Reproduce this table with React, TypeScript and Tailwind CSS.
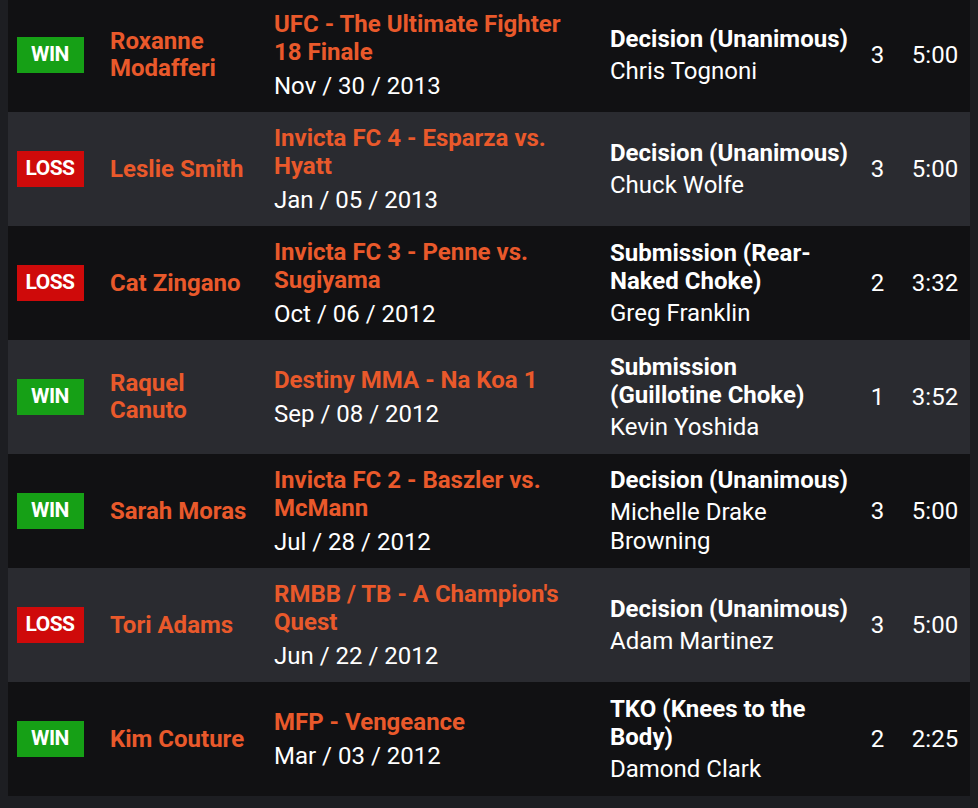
import React from 'react';

type Fight = {
  result: 'win' | 'loss';
  opponent: string[];
  event: string[];
  date: string;
  method: string[];
  referee: string[];
  round: string;
  time: string;
};

const fights: Fight[] = [
  { result: 'win', opponent: ['Roxanne', 'Modafferi'], event: ['UFC - The Ultimate Fighter', '18 Finale'], date: 'Nov / 30 / 2013', method: ['Decision (Unanimous)'], referee: ['Chris Tognoni'], round: '3', time: '5:00' },
  { result: 'loss', opponent: ['Leslie Smith'], event: ['Invicta FC 4 - Esparza vs.', 'Hyatt'], date: 'Jan / 05 / 2013', method: ['Decision (Unanimous)'], referee: ['Chuck Wolfe'], round: '3', time: '5:00' },
  { result: 'loss', opponent: ['Cat Zingano'], event: ['Invicta FC 3 - Penne vs.', 'Sugiyama'], date: 'Oct / 06 / 2012', method: ['Submission (Rear-', 'Naked Choke)'], referee: ['Greg Franklin'], round: '2', time: '3:32' },
  { result: 'win', opponent: ['Raquel', 'Canuto'], event: ['Destiny MMA - Na Koa 1'], date: 'Sep / 08 / 2012', method: ['Submission', '(Guillotine Choke)'], referee: ['Kevin Yoshida'], round: '1', time: '3:52' },
  { result: 'win', opponent: ['Sarah Moras'], event: ['Invicta FC 2 - Baszler vs.', 'McMann'], date: 'Jul / 28 / 2012', method: ['Decision (Unanimous)'], referee: ['Michelle Drake', 'Browning'], round: '3', time: '5:00' },
  { result: 'loss', opponent: ['Tori Adams'], event: ["RMBB / TB - A Champion's", 'Quest'], date: 'Jun / 22 / 2012', method: ['Decision (Unanimous)'], referee: ['Adam Martinez'], round: '3', time: '5:00' },
  { result: 'win', opponent: ['Kim Couture'], event: ['MFP - Vengeance'], date: 'Mar / 03 / 2012', method: ['TKO (Knees to the', 'Body)'], referee: ['Damond Clark'], round: '2', time: '2:25' },
];

const Lines = ({ lines, className }: { lines: string[]; className: string }) => (
  <div className={className}>
    {lines.map((l, i) => (
      <div key={i} className="whitespace-nowrap">{l}</div>
    ))}
  </div>
);

const FightRow = ({ f, idx }: { f: Fight; idx: number }) => (
  <div className={`flex items-center h-[114px] pl-2 ${idx % 2 === 0 ? 'bg-[#111113]' : 'bg-[#2a2b30]'}`}>
    <div className="w-[68px] shrink-0 flex justify-center">
      {f.result === 'win' ? (
        <span className="w-[67px] h-[36px] flex items-center justify-center bg-[#16a016] text-white font-bold text-[21px] tracking-[-0.5px]">WIN</span>
      ) : (
        <span className="w-[67px] h-[36px] flex items-center justify-center bg-[#cf0a0a] text-white font-bold text-[21px] tracking-[-0.5px]">LOSS</span>
      )}
    </div>
    <Lines lines={f.opponent} className="w-[164px] ml-[26px] shrink-0 text-[#e9592b] font-bold text-[24px] leading-[27px]" />
    <div className="w-[336px] shrink-0">
      <Lines lines={f.event} className="text-[#e9592b] font-bold text-[24px] leading-[28px]" />
      <div className="text-white text-[24px] leading-[28px] mt-[6px] whitespace-nowrap">{f.date}</div>
    </div>
    <div className="w-[250px] shrink-0">
      <Lines lines={f.method} className="text-white font-bold text-[24px] leading-[28px]" />
      <Lines lines={f.referee} className="text-white text-[24px] leading-[29px] mt-[4px]" />
    </div>
    <div className="w-[35px] shrink-0 text-center text-white text-[24px]">{f.round}</div>
    <div className="w-[60px] ml-[10px] shrink-0 text-center text-white text-[24px]">{f.time}</div>
  </div>
);

export default function App() {
  return (
    <div className="w-[978px] h-[808px] overflow-hidden bg-[#1d1e22] px-2 font-['Roboto',sans-serif]">
      <div className="-mt-[2px] flex flex-col">
        {fights.map((f, i) => (
          <FightRow key={i} f={f} idx={i} />
        ))}
      </div>
    </div>
  );
}
